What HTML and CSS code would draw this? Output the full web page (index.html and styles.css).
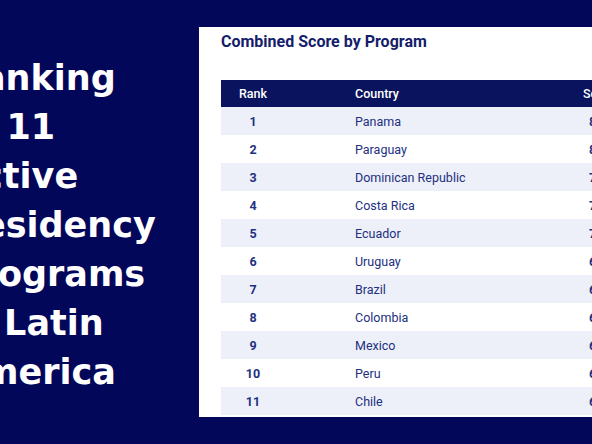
FILE: index.html
```html
<!DOCTYPE html>
<html lang="en">
<head>
    <meta charset="UTF-8">
    <meta name="viewport" content="width=device-width, initial-scale=1.0">
    <title>Residency Programs Ranking</title>
    <link rel="stylesheet" href="styles.css">
</head>
<body>
    <div class="slide">
        <div class="headline">
            <h1>Ranking<br>of 11<br>Active<br>Residency<br>Programs<br>in Latin<br>America</h1>
        </div>

        <div class="card">
            <h2>Combined Score by Program</h2>
            <table class="score-table">
                <thead>
                    <tr>
                        <th class="rank">Rank</th>
                        <th class="country">Country</th>
                        <th class="score">Score</th>
                    </tr>
                </thead>
                <tbody>
                    <tr><td class="rank">1</td><td class="country">Panama</td><td class="score">8.6</td></tr>
                    <tr><td class="rank">2</td><td class="country">Paraguay</td><td class="score">8.1</td></tr>
                    <tr><td class="rank">3</td><td class="country">Dominican Republic</td><td class="score">7.8</td></tr>
                    <tr><td class="rank">4</td><td class="country">Costa Rica</td><td class="score">7.5</td></tr>
                    <tr><td class="rank">5</td><td class="country">Ecuador</td><td class="score">7.2</td></tr>
                    <tr><td class="rank">6</td><td class="country">Uruguay</td><td class="score">6.9</td></tr>
                    <tr><td class="rank">7</td><td class="country">Brazil</td><td class="score">6.7</td></tr>
                    <tr><td class="rank">8</td><td class="country">Colombia</td><td class="score">6.5</td></tr>
                    <tr><td class="rank">9</td><td class="country">Mexico</td><td class="score">6.3</td></tr>
                    <tr><td class="rank">10</td><td class="country">Peru</td><td class="score">6.1</td></tr>
                    <tr><td class="rank">11</td><td class="country">Chile</td><td class="score">6.0</td></tr>
                </tbody>
            </table>
        </div>
    </div>
</body>
</html>
```

FILE: styles.css
```css
body {
    margin: 0;
    padding: 0;
    background-color: #03075a;
    font-family: Roboto, "Liberation Sans", sans-serif;
    overflow: hidden;
}

.slide {
    display: flex;
    width: 592px;
    height: 444px;
    overflow: hidden;
}

.headline {
    width: 199px;
    flex-shrink: 0;
    overflow: hidden;
}

.headline h1 {
    margin: 54px 0 0 -45px;
    color: white;
    font-family: "DejaVu Sans", sans-serif;
    font-weight: 700;
    font-size: 35px;
    line-height: 49px;
    white-space: nowrap;
}

.card {
    flex-shrink: 0;
    width: 420px;
    height: 390px;
    margin-top: 27px;
    padding-left: 22px;
    background-color: white;
    display: flex;
    flex-direction: column;
}

.card h2 {
    margin: 5px 0 0;
    color: #141d6a;
    font-size: 16px;
    font-weight: 700;
    line-height: 20px;
}

.score-table {
    margin-top: 28px;
    border-collapse: collapse;
    table-layout: fixed;
    width: 398px;
    color: #22307f;
    font-size: 12.5px;
}

.score-table th {
    background-color: #0a135e;
    color: white;
    font-weight: 500;
    height: 27px;
    padding: 0;
}

.score-table td {
    height: 28px;
    padding: 0;
}

.score-table tbody tr:nth-child(odd) {
    background-color: #eef0f9;
}

.rank {
    width: 64px;
    text-align: center;
}

td.rank {
    font-weight: 700;
}

.country {
    width: 228px;
    padding-left: 70px !important;
    text-align: left;
}

.score {
    text-align: left;
    padding-left: 0;
}

td.score {
    font-weight: 700;
    padding-left: 6px !important;
}
```
